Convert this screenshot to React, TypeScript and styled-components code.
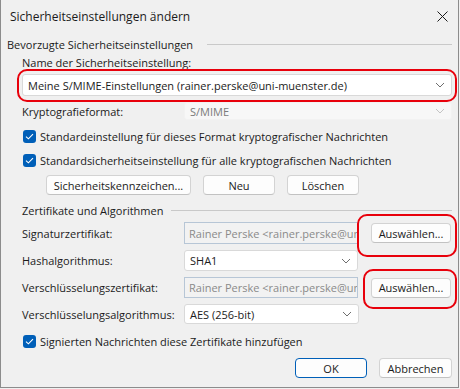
import React from "react";
import styled, { createGlobalStyle } from "styled-components";

const GlobalStyle = createGlobalStyle`
  body {
    margin: 0;
    background: #f0f0f0;
    font-family: "Open Sans", "Noto Sans", sans-serif;
    font-size: 11px;
    color: #1b1b1b;
  }
`;

const Window = styled.div`
  position: relative;
  box-sizing: border-box;
  width: 459px;
  height: 388px;
  background: #f0f0f0;
  border: 1px solid #8c8c8c;
  border-top: none;
`;

const TitleBar = styled.div`
  height: 33px;
  display: flex;
  align-items: center;
  justify-content: space-between;
  padding: 0 10px 1px 9px;
  font-size: 12px;
`;

const CloseBtn = styled.div`
  width: 11px;
  height: 11px;
  display: flex;
`;

const Body = styled.div`
  padding: 0 6px 0 21px;
`;

const Block = styled.div<{ $mt: number; $h?: number }>`
  margin-top: ${(p) => p.$mt}px;
  height: ${(p) => (p.$h ? `${p.$h}px` : "auto")};
  display: flex;
  align-items: center;
`;

const GroupHeader = styled(Block)<{ $indent?: number; $gap: number }>`
  gap: ${(p) => p.$gap}px;
  margin-left: ${(p) => p.$indent ?? 0}px;
  &::after {
    content: "";
    flex: 1;
    height: 1px;
    background: #c9c9c9;
  }
`;

const Label = styled.span<{ $w?: number }>`
  width: ${(p) => (p.$w ? `${p.$w}px` : "auto")};
  flex-shrink: 0;
  white-space: nowrap;
`;

const Select = styled.div<{ $w?: number; $disabled?: boolean }>`
  box-sizing: border-box;
  width: ${(p) => (p.$w ? `${p.$w}px` : "auto")};
  flex: ${(p) => (p.$w ? "none" : "1")};
  height: 100%;
  display: flex;
  align-items: center;
  justify-content: space-between;
  padding: 0 6px 0 5px;
  background: ${(p) => (p.$disabled ? "#f7f7f7" : "#ffffff")};
  border: 1px solid ${(p) => (p.$disabled ? "#f2f2f2" : "#d9d9d9")};
  border-radius: 3px;
  color: ${(p) => (p.$disabled ? "#7a7a7a" : "#1b1b1b")};
  white-space: nowrap;
  overflow: hidden;
`;

const Field = styled.div`
  box-sizing: border-box;
  width: 174px;
  height: 100%;
  display: flex;
  align-items: center;
  padding: 0 4px;
  background: #f2f2f2;
  border: 1px solid #b7c6d6;
  color: #8a8a8a;
  white-space: nowrap;
  overflow: hidden;
`;

const Button = styled.button<{ $w: number; $primary?: boolean; $ml?: number }>`
  box-sizing: border-box;
  width: ${(p) => p.$w}px;
  height: 20px;
  margin-left: ${(p) => p.$ml ?? 0}px;
  padding: 0;
  font: inherit;
  color: #1b1b1b;
  background: #fdfdfd;
  border: 1px solid ${(p) => (p.$primary ? "#005fb8" : "#d3d3d3")};
  border-bottom-color: ${(p) => (p.$primary ? "#005fb8" : "#c2c2c2")};
  border-radius: 4px;
  white-space: nowrap;
`;

const ButtonRow = styled(Block)<{ $pl?: number; $justify?: string }>`
  gap: 12px;
  padding-left: ${(p) => p.$pl ?? 0}px;
  justify-content: ${(p) => p.$justify ?? "flex-start"};
`;

const CheckRow = styled(Block)`
  gap: 4px;
`;

const Box = styled.span`
  width: 13px;
  height: 13px;
  border-radius: 3px;
  background: #005fb8;
  display: flex;
  align-items: center;
  justify-content: center;
  margin-left: 1px;
`;

const Highlight = styled.div<{ $x: number; $y: number; $w: number; $h: number }>`
  position: absolute;
  left: ${(p) => p.$x}px;
  top: ${(p) => p.$y}px;
  width: ${(p) => p.$w}px;
  height: ${(p) => p.$h}px;
  box-sizing: border-box;
  border: 2.5px solid #e8000b;
  border-radius: 10px;
  pointer-events: none;
`;

const Chevron = ({ color = "#6e6e6e" }: { color?: string }) => (
  <svg width="10" height="6" viewBox="0 0 10 6">
    <path d="M1 1l4 4 4-4" fill="none" stroke={color} strokeWidth="1" />
  </svg>
);

const Check = ({ label, mt }: { label: string; mt: number }) => (
  <CheckRow $mt={mt} $h={16}>
    <Box>
      <svg width="9" height="7" viewBox="0 0 9 7">
        <path d="M1 3.6l2.4 2.2L8 1.2" fill="none" stroke="#fff" strokeWidth="1.1" />
      </svg>
    </Box>
    <span>{label}</span>
  </CheckRow>
);

export default function App() {
  return (
    <>
      <GlobalStyle />
      <Window>
        <TitleBar>
          <span>Sicherheitseinstellungen ändern</span>
          <CloseBtn>
            <svg width="11" height="11" viewBox="0 0 11 11">
              <path d="M0.5 0.5l10 10M10.5 0.5l-10 10" stroke="#1b1b1b" strokeWidth="1" />
            </svg>
          </CloseBtn>
        </TitleBar>
        <Body>
          <GroupHeader $mt={2} $h={16} $indent={-15} $gap={14}>
            <span>Bevorzugte Sicherheitseinstellungen</span>
          </GroupHeader>
          <Block $mt={2} $h={16}>
            <Label>Name der Sicherheitseinstellung:</Label>
          </Block>
          <Block $mt={4} $h={22}>
            <Select>
              <span>Meine S/MIME-Einstellungen (rainer.perske@uni-muenster.de)</span>
              <Chevron />
            </Select>
          </Block>
          <Block $mt={6} $h={18}>
            <Label $w={162}>Kryptografieformat:</Label>
            <Select $disabled>
              <span>S/MIME</span>
              <Chevron color="#c4c4c4" />
            </Select>
          </Block>
          <Check mt={8} label="Standardeinstellung für dieses Format kryptografischer Nachrichten" />
          <Check mt={8} label="Standardsicherheitseinstellung für alle kryptografischen Nachrichten" />
          <ButtonRow $mt={7} $h={20} $pl={24}>
            <Button $w={145}>Sicherheitskennzeichen...</Button>
            <Button $w={72}>Neu</Button>
            <Button $w={72}>Löschen</Button>
          </ButtonRow>
          <GroupHeader $mt={7} $h={16} $gap={8}>
            <span>Zertifikate und Algorithmen</span>
          </GroupHeader>
          <Block $mt={4} $h={22}>
            <Label $w={162}>Signaturzertifikat:</Label>
            <Field>Rainer Perske &lt;rainer.perske@un</Field>
            <Button $w={80} $ml={13}>Auswählen...</Button>
          </Block>
          <Block $mt={6} $h={21}>
            <Label $w={162}>Hashalgorithmus:</Label>
            <Select $w={174}>
              <span>SHA1</span>
              <Chevron />
            </Select>
          </Block>
          <Block $mt={6} $h={21}>
            <Label $w={162}>Verschlüsselungszertifikat:</Label>
            <Field>Rainer Perske &lt;rainer.perske@un</Field>
            <Button $w={80} $ml={13}>Auswählen...</Button>
          </Block>
          <Block $mt={6} $h={20}>
            <Label $w={162}>Verschlüsselungsalgorithmus:</Label>
            <Select $w={175}>
              <span>AES (256-bit)</span>
              <Chevron />
            </Select>
          </Block>
          <Check mt={9} label="Signierten Nachrichten diese Zertifikate hinzufügen" />
          <ButtonRow $mt={9} $h={20} $justify="flex-end">
            <Button $w={72} $primary>OK</Button>
            <Button $w={73}>Abbrechen</Button>
          </ButtonRow>
        </Body>
        <Highlight $x={16} $y={69} $w={440} $h={33} />
        <Highlight $x={356} $y={214} $w={100} $h={43} />
        <Highlight $x={362} $y={269} $w={94} $h={40} />
      </Window>
    </>
  );
}
